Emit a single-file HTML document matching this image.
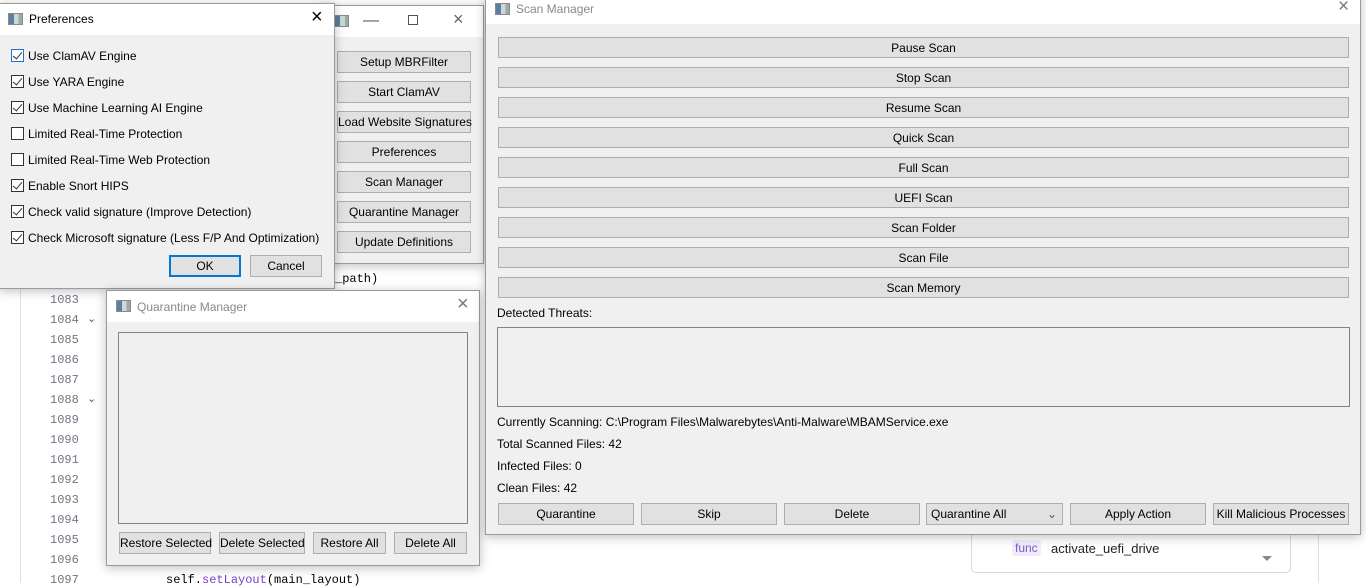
<!DOCTYPE html>
<html><head><meta charset="utf-8"><style>
*{box-sizing:border-box;margin:0;padding:0}
body{width:1366px;height:583px;overflow:hidden;background:#fff;position:relative;font-family:"Liberation Sans",sans-serif;font-size:12px;color:#000}
.a{position:absolute}
.win{position:absolute;background:#f0f0f0;border:1px solid #9a9a9a;box-shadow:0 2px 10px rgba(0,0,0,.25)}
.tb{position:absolute;left:0;right:0;top:0;background:#fff}
.btn{position:absolute;background:#e1e1e1;border:1px solid #adadad;text-align:center;line-height:20px;font-size:12px;white-space:nowrap}
.ico{position:absolute;width:15px;height:12px;border:1px solid #8a8a8a;background:linear-gradient(90deg,#5a7fa0 0 40%,#cfd8d0 40% 75%,#9aa 75%)}
.ln{position:absolute;left:50px;font-family:"Liberation Mono",monospace;font-size:12px;color:#6e7681}
.cb{position:absolute;width:13px;height:13px;border:1px solid #333;background:#fff}
.cb.on::after{content:"";position:absolute;left:3px;top:0px;width:4px;height:8px;border:solid #333;border-width:0 1.5px 1.5px 0;transform:rotate(40deg)}
.lbl{position:absolute;left:28px;font-size:12px}
</style></head><body>
<div class="a" style="left:20px;top:290px;width:1px;height:293px;background:#e0e0e0"></div>
<div class="ln" style="top:293px">1083</div>
<div class="ln" style="top:313px">1084</div>
<div class="ln" style="top:333px">1085</div>
<div class="ln" style="top:353px">1086</div>
<div class="ln" style="top:373px">1087</div>
<div class="ln" style="top:393px">1088</div>
<div class="ln" style="top:413px">1089</div>
<div class="ln" style="top:433px">1090</div>
<div class="ln" style="top:453px">1091</div>
<div class="ln" style="top:473px">1092</div>
<div class="ln" style="top:493px">1093</div>
<div class="ln" style="top:513px">1094</div>
<div class="ln" style="top:533px">1095</div>
<div class="ln" style="top:553px">1096</div>
<div class="ln" style="top:573px">1097</div>
<div class="a" style="left:87px;top:312px;color:#555;font-size:11px">&#8964;</div>
<div class="a" style="left:87px;top:392px;color:#555;font-size:11px">&#8964;</div>
<div class="a" style="left:166px;top:573px;font-family:'Liberation Mono',monospace;font-size:12px">self.<span style="color:#7a3ec8">setLayout</span>(main_layout)</div>
<div class="a" style="left:335px;top:272px;font-family:'Liberation Mono',monospace;font-size:12px">_path)</div>
<div class="a" style="left:1318px;top:535px;width:1px;height:48px;background:#ddd"></div>
<div class="a" style="left:971px;top:528px;width:320px;height:45px;border:1px solid #d8d8d8;border-radius:5px;background:#fff"></div>
<div class="a" style="left:1012px;top:540px;padding:1px 3px;background:#f1ecfb;color:#7a5bc8;border-radius:3px;font-size:12px">func</div>
<div class="a" style="left:1051px;top:541px;font-size:13px;color:#222">activate_uefi_drive</div>
<div class="a" style="left:1262px;top:556px;width:0;height:0;border-left:5px solid transparent;border-right:5px solid transparent;border-top:5px solid #888"></div>

<div class="win" style="left:320px;top:5px;width:164px;height:259px">
 <div class="tb" style="height:31px"></div>
 <div class="ico" style="left:13px;top:9px"></div>
 <div class="a" style="left:42px;top:6px;font-size:16px;color:#555">&#8212;</div>
 <div class="a" style="left:87px;top:9px;width:10px;height:10px;border:1px solid #555"></div>
 <div class="a" style="left:132px;top:3px;font-size:18px;color:#666">&#215;</div>
 <div class="btn" style="left:16px;top:45px;width:134px;height:22px">Setup MBRFilter</div>
 <div class="btn" style="left:16px;top:75px;width:134px;height:22px">Start ClamAV</div>
 <div class="btn" style="left:16px;top:105px;width:134px;height:22px;text-align:right;padding-right:1px">Load Website Signatures</div>
 <div class="btn" style="left:16px;top:135px;width:134px;height:22px">Preferences</div>
 <div class="btn" style="left:16px;top:165px;width:134px;height:22px">Scan Manager</div>
 <div class="btn" style="left:16px;top:195px;width:134px;height:22px">Quarantine Manager</div>
 <div class="btn" style="left:16px;top:225px;width:134px;height:22px">Update Definitions</div>
</div>

<div class="win" style="left:-1px;top:3px;width:336px;height:286px">
 <div class="tb" style="height:31px"></div>
 <div class="ico" style="left:8px;top:9px"></div>
 <div class="a" style="left:29px;top:8px;font-size:12px">Preferences</div>
 <div class="a" style="left:311px;top:2px;font-size:20px">&#215;</div>
 <div class="cb on" style="left:11px;top:45px;border-color:#1a73d9"></div><div class="lbl" style="top:45px">Use ClamAV Engine</div>
 <div class="cb on" style="left:11px;top:71px"></div><div class="lbl" style="top:71px">Use YARA Engine</div>
 <div class="cb on" style="left:11px;top:97px"></div><div class="lbl" style="top:97px">Use Machine Learning AI Engine</div>
 <div class="cb" style="left:11px;top:123px"></div><div class="lbl" style="top:123px">Limited Real-Time Protection</div>
 <div class="cb" style="left:11px;top:149px"></div><div class="lbl" style="top:149px">Limited Real-Time Web Protection</div>
 <div class="cb on" style="left:11px;top:175px"></div><div class="lbl" style="top:175px">Enable Snort HIPS</div>
 <div class="cb on" style="left:11px;top:201px"></div><div class="lbl" style="top:201px">Check valid signature (Improve Detection)</div>
 <div class="cb on" style="left:11px;top:227px"></div><div class="lbl" style="top:227px">Check Microsoft signature (Less F/P And Optimization)</div>
 <div class="btn" style="left:169px;top:251px;width:72px;height:22px;border:2px solid #0078d7;line-height:18px">OK</div>
 <div class="btn" style="left:250px;top:251px;width:72px;height:22px">Cancel</div>
</div>

<div class="win" style="left:106px;top:290px;width:374px;height:276px">
 <div class="tb" style="height:31px"></div>
 <div class="ico" style="left:9px;top:9px"></div>
 <div class="a" style="left:30px;top:9px;color:#888">Quarantine Manager</div>
 <div class="a" style="left:350px;top:2px;font-size:20px;color:#777">&#215;</div>
 <div class="a" style="left:11px;top:41px;width:350px;height:192px;border:1px solid #828282;background:#f0f0f0"></div>
 <div class="btn" style="left:12px;top:241px;width:92px;height:22px">Restore Selected</div>
 <div class="btn" style="left:112px;top:241px;width:86px;height:22px">Delete Selected</div>
 <div class="btn" style="left:206px;top:241px;width:73px;height:22px">Restore All</div>
 <div class="btn" style="left:287px;top:241px;width:73px;height:22px">Delete All</div>
</div>

<div class="win" style="left:485px;top:-7px;width:876px;height:542px">
 <div class="tb" style="height:30px"></div>
 <div class="ico" style="left:9px;top:9px"></div>
 <div class="a" style="left:30px;top:8px;color:#888">Scan Manager</div>
 <div class="a" style="left:852px;top:2px;font-size:19px;color:#777">&#215;</div>
 <div class="btn" style="left:12px;top:43px;width:851px;height:21px">Pause Scan</div>
 <div class="btn" style="left:12px;top:73px;width:851px;height:21px">Stop Scan</div>
 <div class="btn" style="left:12px;top:103px;width:851px;height:21px">Resume Scan</div>
 <div class="btn" style="left:12px;top:133px;width:851px;height:21px">Quick Scan</div>
 <div class="btn" style="left:12px;top:163px;width:851px;height:21px">Full Scan</div>
 <div class="btn" style="left:12px;top:193px;width:851px;height:21px">UEFI Scan</div>
 <div class="btn" style="left:12px;top:223px;width:851px;height:21px">Scan Folder</div>
 <div class="btn" style="left:12px;top:253px;width:851px;height:21px">Scan File</div>
 <div class="btn" style="left:12px;top:283px;width:851px;height:21px">Scan Memory</div>
 <div class="a" style="left:11px;top:312px">Detected Threats:</div>
 <div class="a" style="left:11px;top:333px;width:853px;height:80px;border:1px solid #828282"></div>
 <div class="a" style="left:11px;top:421px">Currently Scanning: C:\Program Files\Malwarebytes\Anti-Malware\MBAMService.exe</div>
 <div class="a" style="left:11px;top:443px">Total Scanned Files: 42</div>
 <div class="a" style="left:11px;top:465px">Infected Files: 0</div>
 <div class="a" style="left:11px;top:487px">Clean Files: 42</div>
 <div class="btn" style="left:12px;top:509px;width:136px;height:22px">Quarantine</div>
 <div class="btn" style="left:155px;top:509px;width:136px;height:22px">Skip</div>
 <div class="btn" style="left:298px;top:509px;width:136px;height:22px">Delete</div>
 <div class="btn" style="left:440px;top:509px;width:137px;height:22px;text-align:left;padding-left:4px">Quarantine All<span style="position:absolute;right:5px;top:0px;color:#555">&#8964;</span></div>
 <div class="btn" style="left:584px;top:509px;width:136px;height:22px">Apply Action</div>
 <div class="btn" style="left:727px;top:509px;width:136px;height:22px">Kill Malicious Processes</div>
</div>
</body></html>
